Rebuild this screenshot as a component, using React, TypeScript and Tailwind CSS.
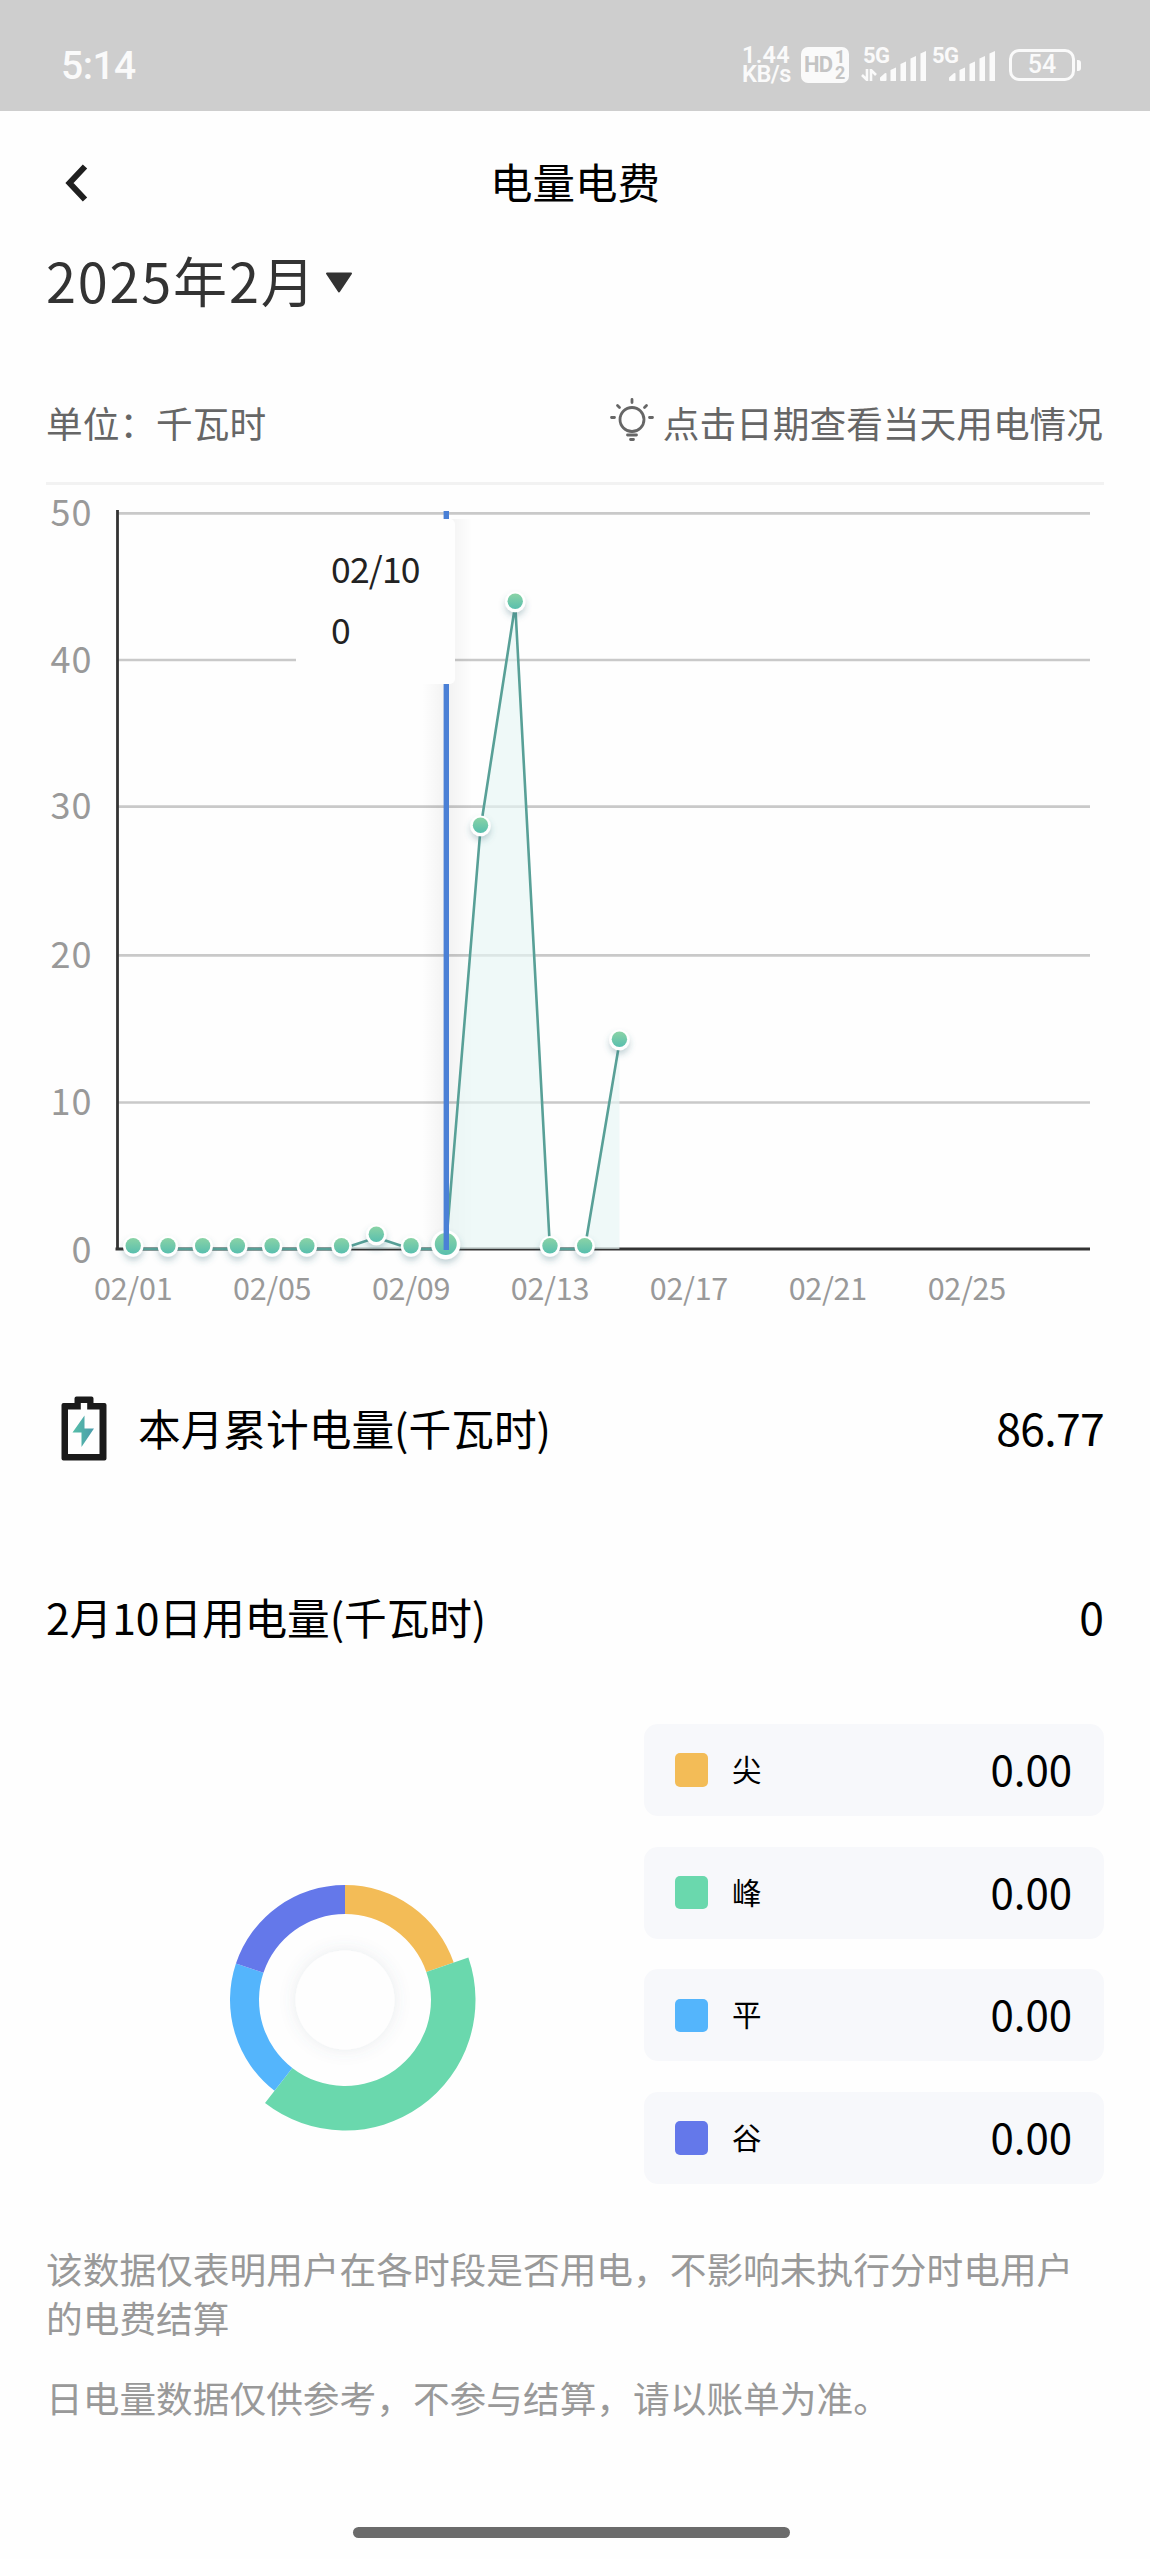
import { clsx } from "clsx";

interface UsagePoint {
  day: number;
  y: number;
}

interface Period {
  label: string;
  value: string;
  swatch: string;
}

const AXIS_LEFT = 117.5;
const AXIS_RIGHT = 1090;
const BASELINE = 1249;
const SELECTED_DAY = 10;

const gridLines = [
  { value: 50, y: 513.3 },
  { value: 40, y: 660 },
  { value: 30, y: 806.7 },
  { value: 20, y: 955.3 },
  { value: 10, y: 1102.5 },
];

const dateTicks = [1, 5, 9, 13, 17, 21, 25];

const points: UsagePoint[] = [
  { day: 1, y: 1249 },
  { day: 2, y: 1249 },
  { day: 3, y: 1249 },
  { day: 4, y: 1249 },
  { day: 5, y: 1249 },
  { day: 6, y: 1249 },
  { day: 7, y: 1249 },
  { day: 8, y: 1237.5 },
  { day: 9, y: 1249 },
  { day: 10, y: 1249 },
  { day: 11, y: 828.5 },
  { day: 12, y: 604.5 },
  { day: 13, y: 1249 },
  { day: 14, y: 1249 },
  { day: 15, y: 1042.5 },
];

const periods: Period[] = [
  { label: "尖", value: "0.00", swatch: "bg-[#f3bc57]" },
  { label: "峰", value: "0.00", swatch: "bg-[#6ad8ad]" },
  { label: "平", value: "0.00", swatch: "bg-[#54b5fc]" },
  { label: "谷", value: "0.00", swatch: "bg-[#6478ea]" },
];

const dayX = (day: number) => 133.2 + (day - 1) * 34.73;

function SignalBars({ className }: { className?: string }) {
  return (
    <svg width="48" height="30" viewBox="0 0 48 30" fill="#fafafa" className={className} aria-hidden="true">
      <path d="M1 29 V27 L5.500 23 V29 Z" stroke="#fafafa" strokeWidth="2" strokeLinejoin="round" />
      <path d="M10.500 19 L16 16.500 V30 H10.500 Z" />
      <path d="M20.500 13 L26 10.500 V30 H20.500 Z" />
      <path d="M30.500 7.500 L36 5 V30 H30.500 Z" />
      <path d="M40.500 2.500 L46 0 V30 H40.500 Z" />
    </svg>
  );
}

function StatusBar() {
  return (
    <div className="flex h-[111px] items-start justify-between bg-[#cecece] pt-[46px] pr-[69px] pl-[61px] text-[#fafafa]">
      <span className="pt-px text-[39px] leading-[38px] font-medium tracking-[-0.5px] font-['Roboto','Noto_Sans_CJK_SC',sans-serif]">
        5:14
      </span>

      <div className="flex h-[38px] items-start font-['Roboto','Noto_Sans_CJK_SC',sans-serif]">
        <div className="w-[59px] text-[23.500px] leading-[18.500px] font-semibold">
          <div className="tracking-[0.2px]">1.44</div>
          <div className="tracking-[-0.5px]">KB/s</div>
        </div>

        {/* HD voice badge */}
        <div className="mt-[1px] flex h-[36px] w-[48px] items-center rounded-[7px] bg-[#fafafa] pl-[3px] text-[#c4c4c4]">
          <span className="w-[31px] text-[22px] leading-[26px] font-bold tracking-[-0.8px]">HD</span>
          <span className="flex flex-col text-[18px] leading-[16px] font-bold">
            <span>1</span>
            <span>2</span>
          </span>
        </div>

        {/* SIM 1 */}
        <div className="relative ml-[12px] h-[36px] w-[69px]">
          <span className="block pl-[2px] text-[22px] leading-[20px] font-bold tracking-[-0.5px]">5G</span>
          <svg
            width="16"
            height="12"
            viewBox="0 0 16 12"
            fill="none"
            stroke="#fafafa"
            strokeWidth="2.600"
            className="absolute top-[23px] left-0"
            aria-hidden="true"
          >
            <path d="M6 0 V11 L1 6 M10 12 V1 L15 6" />
          </svg>
          <SignalBars className="absolute top-[5px] left-[19px]" />
        </div>

        {/* SIM 2 */}
        <div className="relative h-[36px] w-[79px]">
          <span className="block pl-[2px] text-[22px] leading-[20px] font-bold tracking-[-0.5px]">5G</span>
          <SignalBars className="absolute top-[5px] left-[18.500px]" />
        </div>

        {/* Battery */}
        <div className="mt-[3px] flex h-[32px] items-center">
          <div className="flex h-[32px] w-[66px] items-center justify-center rounded-[10px] border-[3px] border-[#fafafa] text-[25px] leading-[26px] font-medium">
            54
          </div>
          <div className="ml-[2px] h-[11px] w-[4px] rounded-r-[3px] bg-[#fafafa]" />
        </div>
      </div>
    </div>
  );
}

function BulbIcon() {
  return (
    <svg
      width="44"
      height="44"
      viewBox="0 0 44 44"
      fill="none"
      stroke="#666"
      strokeWidth="2.800"
      strokeLinecap="round"
      className="relative -top-[2px]"
      aria-hidden="true"
    >
      <circle cx="22" cy="21.500" r="12" />
      <path d="M22 1.500 V4.500 M7.500 7.500 L9.500 9.500 M36.500 7.500 L34.500 9.500 M1.500 19.500 H4.500 M39.500 19.500 H42.500" />
      <path d="M17.500 37 H26.500 M20.500 41.500 H23.500" />
    </svg>
  );
}

function BatteryBoltIcon() {
  return (
    <svg width="46" height="66" viewBox="0 0 46 66" fill="none" aria-hidden="true">
      <defs>
        <linearGradient id="bolt" x1="0" y1="0" x2="1" y2="0">
          <stop offset="0" stopColor="#56bfa8" />
          <stop offset="1" stopColor="#4a9bab" />
        </linearGradient>
      </defs>
      <path
        fill="#1a1a1a"
        fillRule="evenodd"
        d="M15.500 1.500 H30.500 Q32.500 1.500 32.500 3.500 V8 H43.500 Q45.500 8 45.500 10 V63.500 Q45.500 65.500 43.500 65.500 H2.500 Q0.500 65.500 0.500 63.500 V10 Q0.500 8 2.500 8 H13.500 V3.500 Q13.500 1.500 15.500 1.500 Z M19.800 8 V14.500 H7 V59 H38.500 V14.500 H26.200 V8 Z"
      />
      <path fill="url(#bolt)" d="M23.500 20.500 L11.500 37.500 H20.500 V52 L33 33.500 H23.500 Z" />
    </svg>
  );
}

function UsageChart() {
  const line = points.map((p) => `${dayX(p.day)},${p.y}`).join(" ");
  const area = `${dayX(1)},${BASELINE} ${line} ${dayX(15)},${BASELINE}`;

  return (
    <div className="relative h-[835px] w-full">
      <svg width="1150" height="835" viewBox="0 485 1150 835" className="block" aria-label="日用电量">
        <defs>
          <linearGradient id="dot" x1="0" y1="0" x2="0" y2="1">
            <stop offset="0" stopColor="#8ad3a6" />
            <stop offset="1" stopColor="#59bfae" />
          </linearGradient>
          <filter id="dotShadow" x="-60%" y="-60%" width="220%" height="220%">
            <feDropShadow dx="0" dy="4" stdDeviation="3" floodColor="#3a6f7a" floodOpacity="0.3" />
          </filter>
          <linearGradient id="pointerGlow" x1="0" y1="0" x2="1" y2="0">
            <stop offset="0" stopColor="#000" stopOpacity="0" />
            <stop offset="0.5" stopColor="#000" stopOpacity="0.05" />
            <stop offset="1" stopColor="#000" stopOpacity="0" />
          </linearGradient>
        </defs>

        {gridLines.map((g) => (
          <g key={g.value}>
            <path d={`M${AXIS_LEFT} ${g.y} H${AXIS_RIGHT}`} stroke="#c9c9c9" strokeWidth="2.700" />
            <text x="92.500" y={g.y + 12.5} textAnchor="end" fontSize="36" letterSpacing="1" fill="#999">
              {g.value}
            </text>
          </g>
        ))}
        <text x="91.500" y="1262.500" textAnchor="end" fontSize="36" fill="#999">
          0
        </text>

        <path d={`M${AXIS_LEFT} 510 V1250`} stroke="#333" strokeWidth="2.800" />
        <path d={`M${AXIS_LEFT - 2} ${BASELINE} H${AXIS_RIGHT}`} stroke="#333" strokeWidth="2.800" />

        {dateTicks.map((day) => (
          <text
            key={day}
            x={dayX(day)}
            y="1300"
            textAnchor="middle"
            fontSize="30.500"
            letterSpacing="-0.300"
            fill="#999"
          >
            {`02/${String(day).padStart(2, "0")}`}
          </text>
        ))}

        <rect x="422" y="519" width="50" height="730" fill="url(#pointerGlow)" />
        <polygon points={area} fill="#e6f6f5" fillOpacity="0.650" />
        <polyline points={line} fill="none" stroke="#58a097" strokeWidth="2.600" strokeLinejoin="round" />

        {points.map((p) => {
          const active = p.day === SELECTED_DAY;
          const cy = active ? p.y - 5 : p.y - 3.3;
          return (
            <g key={p.day}>
              <circle cx={dayX(p.day)} cy={cy + 0.7} r={active ? 14.5 : 10.3} fill="#fff" filter="url(#dotShadow)" />
              <circle cx={dayX(p.day)} cy={cy} r={active ? 11 : 7.7} fill="url(#dot)" />
            </g>
          );
        })}

        <path d="M446.300 511 V1250" stroke="#4a80d6" strokeWidth="5.400" />
      </svg>

      {/* Tooltip for the selected day */}
      <div className="absolute top-[34px] left-[296px] h-[165px] w-[159px] rounded-[5px] bg-[#fefefe] pt-[19px] pl-[35px] text-[35.500px] leading-[60.500px] text-[#222]">
        <div className="tracking-[-0.8px]">02/10</div>
        <div>0</div>
      </div>
    </div>
  );
}

function polar(r: number, deg: number) {
  const a = ((deg - 90) * Math.PI) / 180;
  return `${(140 + r * Math.cos(a)).toFixed(2)} ${(140 + r * Math.sin(a)).toFixed(2)}`;
}

function ringSlice(from: number, to: number, outer: number, inner = 86) {
  return `M${polar(outer, from)} A${outer} ${outer} 0 0 1 ${polar(outer, to)} L${polar(inner, to)} A${inner} ${inner} 0 0 0 ${polar(inner, from)} Z`;
}

function PeriodDonut() {
  return (
    <svg width="280" height="280" viewBox="0 0 280 280" aria-hidden="true">
      <defs>
        <filter id="hubShadow" x="-50%" y="-50%" width="200%" height="200%">
          <feDropShadow dx="0" dy="0" stdDeviation="8" floodColor="#5a6a80" floodOpacity="0.13" />
        </filter>
      </defs>
      <path d={ringSlice(0, 71, 115)} fill="#f3bc57" />
      <path d={ringSlice(71, 217.8, 130.5)} fill="#6ad8ad" />
      <path d={ringSlice(217.8, 288.5, 115)} fill="#54b5fc" />
      <path d={ringSlice(288.5, 360, 115)} fill="#6478ea" />
      <circle cx="140" cy="140" r="49.500" fill="#fefefe" filter="url(#hubShadow)" />
    </svg>
  );
}

function PeriodCard({ period }: { period: Period }) {
  return (
    <div className="flex h-[92px] items-center rounded-[14px] bg-[#f7f8fb] pr-[32px] pl-[30.500px]">
      <span className={clsx("h-[33.500px] w-[33.500px] rounded-[5px]", period.swatch)} />
      <span className="mb-[4px] ml-[24px] text-[29.500px] leading-[44px] text-black">{period.label}</span>
      <span className="mb-[4px] ml-auto text-[42px] leading-[62px] text-black">{period.value}</span>
    </div>
  );
}

export default function App() {
  return (
    <div className="flex h-[2559px] w-[1150px] flex-col overflow-hidden bg-[#fefefe] font-['Noto_Sans_CJK_SC',sans-serif]">
      <StatusBar />

      {/* Title bar */}
      <header className="grid h-[143px] grid-cols-[1fr_auto_1fr] items-center px-[64px]">
        <svg width="25" height="38" viewBox="0 0 25 38" fill="none" stroke="#1f1f1f" strokeWidth="6" aria-label="返回">
          <path d="M21 2.500 L5.500 19 L21 35.500" />
        </svg>
        <h1 className="pb-[4px] text-[42.500px] leading-[62px] text-black">电量电费</h1>
      </header>

      <main className="flex flex-col px-[46px]">
        {/* Month picker */}
        <button type="button" className="-mt-[14px] flex h-[80px] items-center text-[#333]">
          <span className="text-[54px] leading-[80px] tracking-[1.800px]">2025年2月</span>
          <svg width="28" height="22" viewBox="0 0 28 22" fill="#333" className="mt-[5px] ml-[9px]" aria-hidden="true">
            <path d="M2 1.500 H26 L14 19.500 Z" stroke="#333" strokeWidth="2" strokeLinejoin="round" />
          </svg>
        </button>

        <div className="mt-[67px] flex h-[70px] items-center justify-between text-[36.700px] leading-[54px] text-[#666]">
          <span>单位：千瓦时</span>
          <span className="mr-px flex items-center gap-[9px]">
            <BulbIcon />
            点击日期查看当天用电情况
          </span>
        </div>
        <div className="mt-[25px] h-[3px] bg-[#f2f2f2]" />
      </main>

      <UsageChart />

      <section className="flex flex-col px-[46px] text-black">
        <div className="mt-[67px] flex h-[80px] items-center">
          <div className="mt-[2px] ml-[15px]">
            <BatteryBoltIcon />
          </div>
          <span className="ml-[31px] text-[42.700px] leading-[62px]">本月累计电量(千瓦时)</span>
          <span className="ml-auto text-[44.500px] leading-[66px] tracking-[-0.700px]">86.77</span>
        </div>

        <div className="mt-[109px] flex h-[80px] items-center justify-between">
          <span className="text-[42.700px] leading-[62px] tracking-[-0.100px]">2月10日用电量(千瓦时)</span>
          <span className="text-[44.500px] leading-[66px]">0</span>
        </div>

        <div className="mt-[68px] flex h-[460px]">
          <div className="flex w-[598px] items-center justify-center pt-[92px]">
            <PeriodDonut />
          </div>
          <div className="flex flex-1 flex-col justify-between">
            {periods.map((p) => (
              <PeriodCard key={p.label} period={p} />
            ))}
          </div>
        </div>

        <div className="mt-[60px] flex flex-col gap-[31px] text-[36.700px] leading-[49px] text-[#999]">
          <p>该数据仅表明用户在各时段是否用电，不影响未执行分时电用户的电费结算</p>
          <p>日电量数据仅供参考，不参与结算，请以账单为准。</p>
        </div>
      </section>

      {/* Home indicator */}
      <div className="mt-[105px] ml-[353px] h-[11px] w-[437px] rounded-full bg-[#6b6b6b]" />
    </div>
  );
}
